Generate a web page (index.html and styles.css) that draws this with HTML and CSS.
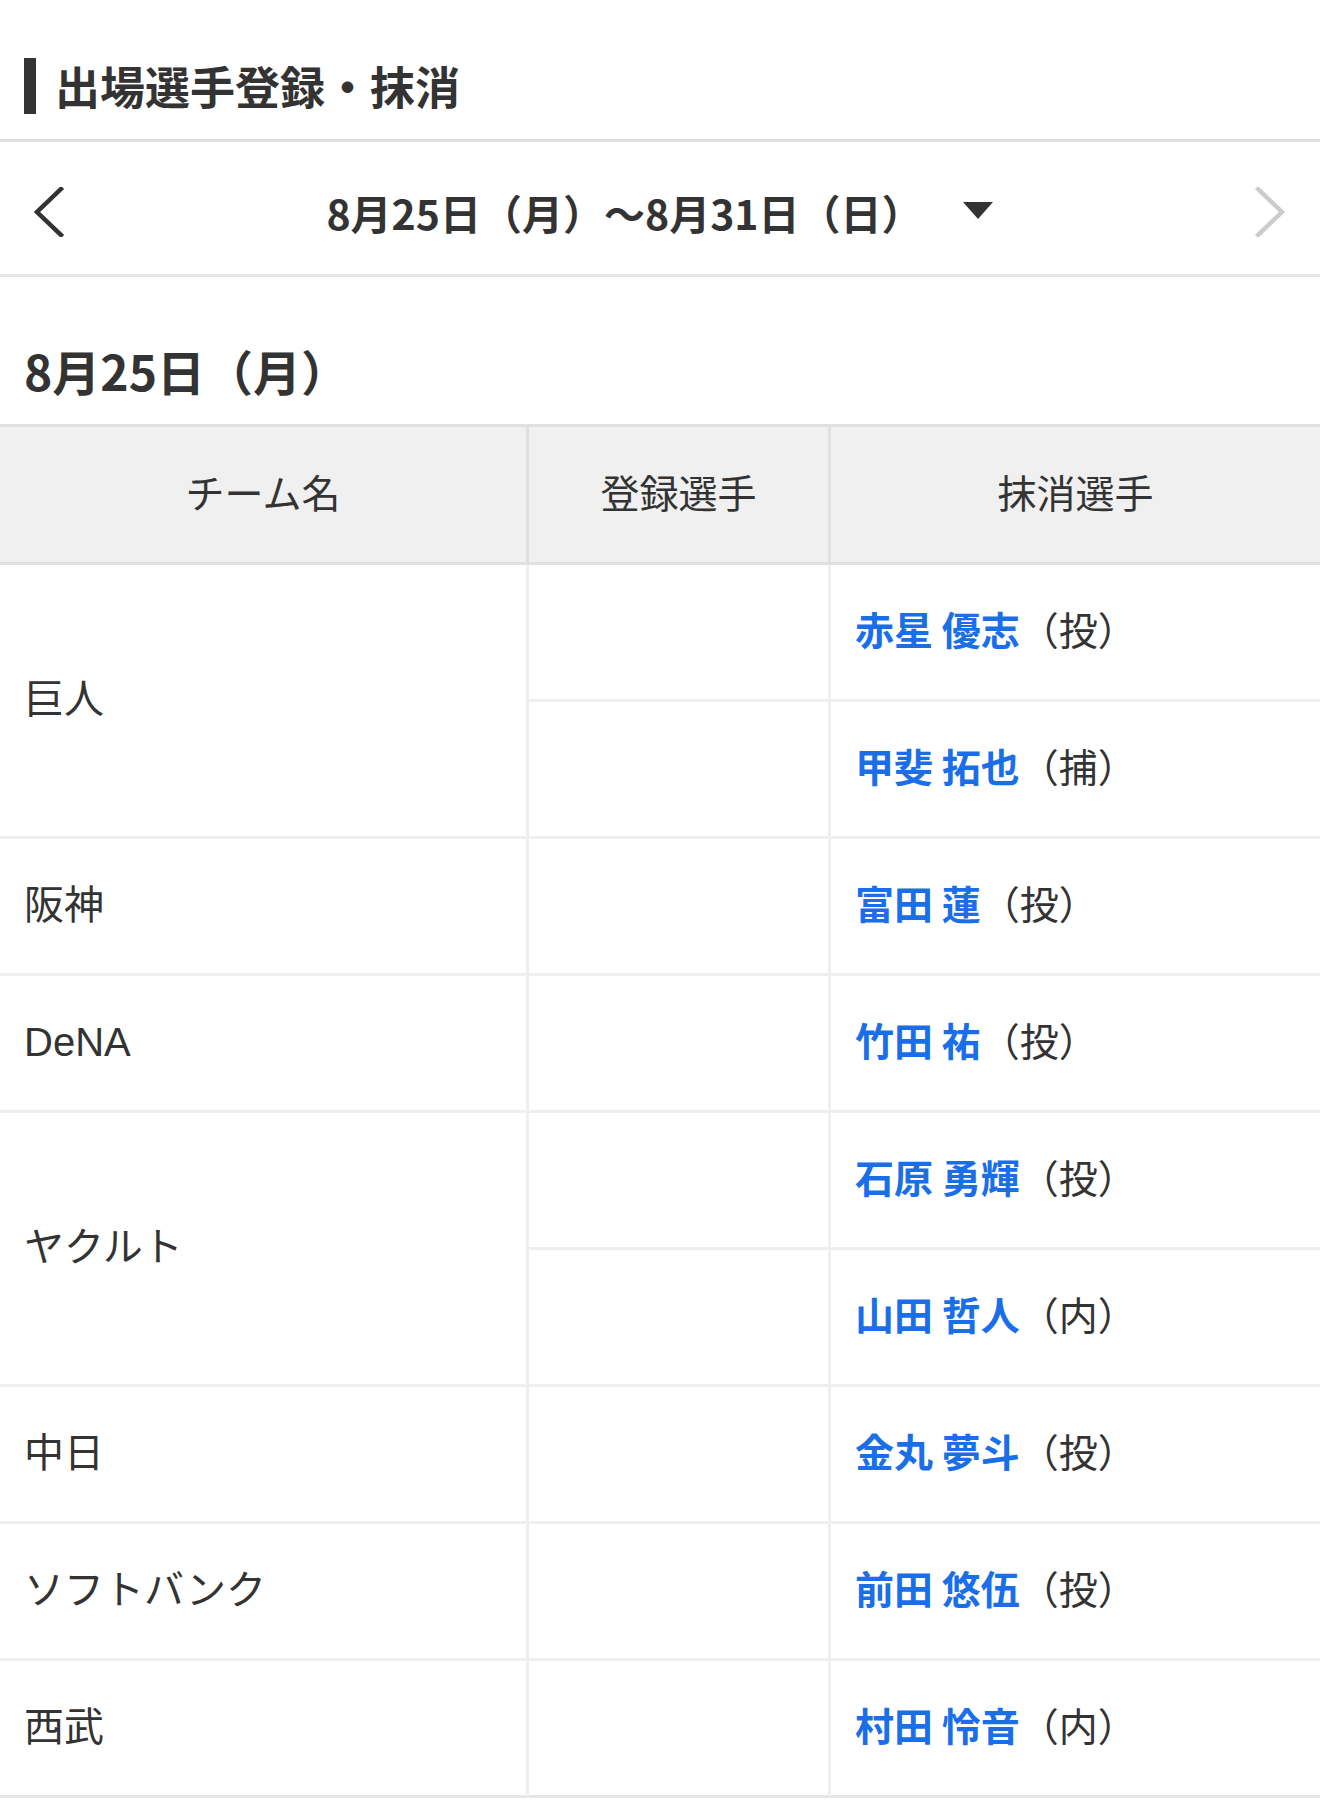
FILE: index.html
```
<!DOCTYPE html>
<html lang="ja">
<head>
<meta charset="utf-8">
<title>出場選手登録・抹消</title>
<link rel="stylesheet" href="styles.css">
</head>
<body>
<section class="page">
  <header class="title-block">
    <span class="title-bar"></span>
    <h1 class="title">出場選手登録・抹消</h1>
  </header>

  <nav class="week-nav">
    <a class="nav-arrow prev" href="#" aria-label="前の週">
      <svg width="30" height="50" viewBox="0 0 30 50"><polyline points="27,2 3,25 27,48" fill="none" stroke="#333" stroke-width="4.5" stroke-linecap="square" stroke-linejoin="miter"/></svg>
    </a>
    <div class="week-select">
      <span class="week-label">8月25日（月）〜8月31日（日）</span>
      <svg class="week-caret" width="30" height="17" viewBox="0 0 30 17"><polygon points="0,0 30,0 15,17" fill="#333"/></svg>
    </div>
    <a class="nav-arrow next" href="#" aria-label="次の週">
      <svg width="30" height="50" viewBox="0 0 30 50"><polyline points="3,2 27,25 3,48" fill="none" stroke="#ccc" stroke-width="4.5" stroke-linecap="square" stroke-linejoin="miter"/></svg>
    </a>
  </nav>

  <h2 class="day-heading">8月25日（月）</h2>

  <div class="roster">
    <div class="cell head">チーム名</div>
    <div class="cell head">登録選手</div>
    <div class="cell head last">抹消選手</div>

    <div class="cell team span2">巨人</div>
    <div class="cell reg"></div>
    <div class="cell out last"><a href="#" class="player">赤星 優志</a>（投）</div>
    <div class="cell reg"></div>
    <div class="cell out last"><a href="#" class="player">甲斐 拓也</a>（捕）</div>

    <div class="cell team">阪神</div>
    <div class="cell reg"></div>
    <div class="cell out last"><a href="#" class="player">富田 蓮</a>（投）</div>

    <div class="cell team">DeNA</div>
    <div class="cell reg"></div>
    <div class="cell out last"><a href="#" class="player">竹田 祐</a>（投）</div>

    <div class="cell team span2">ヤクルト</div>
    <div class="cell reg"></div>
    <div class="cell out last"><a href="#" class="player">石原 勇輝</a>（投）</div>
    <div class="cell reg"></div>
    <div class="cell out last"><a href="#" class="player">山田 哲人</a>（内）</div>

    <div class="cell team">中日</div>
    <div class="cell reg"></div>
    <div class="cell out last"><a href="#" class="player">金丸 夢斗</a>（投）</div>

    <div class="cell team">ソフトバンク</div>
    <div class="cell reg"></div>
    <div class="cell out last"><a href="#" class="player">前田 悠伍</a>（投）</div>

    <div class="cell team final">西武</div>
    <div class="cell reg final"></div>
    <div class="cell out last final"><a href="#" class="player">村田 怜音</a>（内）</div>
  </div>
</section>
</body>
</html>
```
FILE: styles.css
```
* {
  box-sizing: border-box;
}

html, body {
  margin: 0;
  padding: 0;
  background: #fff;
}

body {
  font-family: "Noto Sans CJK JP", "Noto Sans", sans-serif;
  color: #333;
}

.page {
  width: 1320px;
}

/* Title */
.title-block {
  height: 142px;
  padding: 58px 0 0 24px;
  border-bottom: 3px solid #e0e0e0;
  display: flex;
  align-items: flex-start;
}

.title-bar {
  width: 12px;
  height: 56px;
  background: #333;
  flex: none;
}

.title {
  margin: 0 0 0 19px;
  font-size: 45px;
  font-weight: 700;
  line-height: 56px;
  color: #333;
}

/* Week navigation */
.week-nav {
  height: 135px;
  padding-top: 8px;
  border-bottom: 3px solid #e6e6e6;
  display: flex;
  align-items: center;
}

.nav-arrow {
  display: flex;
  flex: none;
}

.nav-arrow svg {
  display: block;
}

.nav-arrow.prev {
  width: 64px;
  padding-left: 34px;
}

.nav-arrow.next {
  width: 30px;
  margin-right: 35px;
}

.week-select {
  flex: 1;
  display: flex;
  align-items: center;
  justify-content: center;
  gap: 40px;
}

.week-label {
  font-size: 41px;
  font-weight: 700;
  line-height: 50px;
}

.week-caret {
  display: block;
  margin-top: -4px;
}

/* Day heading */
.day-heading {
  margin: 0;
  height: 147px;
  padding: 39px 0 0 24px;
  display: flex;
  align-items: center;
  font-size: 48px;
  font-weight: 700;
  line-height: 60px;
  color: #333;
}

/* Roster grid */
.roster {
  display: grid;
  grid-template-columns: 529px 302px 1fr;
  border-top: 3px solid #e0e0e0;
}

.cell {
  border-right: 3px solid #efefef;
  border-bottom: 3px solid #efefef;
  display: flex;
  align-items: center;
  min-height: 137px;
  padding: 0 0 8px 24px;
  font-size: 39px;
  line-height: 50px;
}

.cell.last {
  border-right: 0;
}

.cell.head {
  min-height: 138px;
  background: #f0f0f0;
  border-right-color: #e0e0e0;
  border-bottom-color: #e0e0e0;
  justify-content: center;
  padding: 0 0 8px;
}

.cell.team {
  font-family: "Liberation Sans", "Noto Sans CJK JP", sans-serif;
  font-size: 40px;
  padding-bottom: 3px;
}

.cell.span2 {
  grid-row: span 2;
}

.cell.final {
  border-bottom-color: #e6e6e6;
}

.player {
  color: #1a6fe8;
  font-weight: 700;
  text-decoration: none;
}
```
